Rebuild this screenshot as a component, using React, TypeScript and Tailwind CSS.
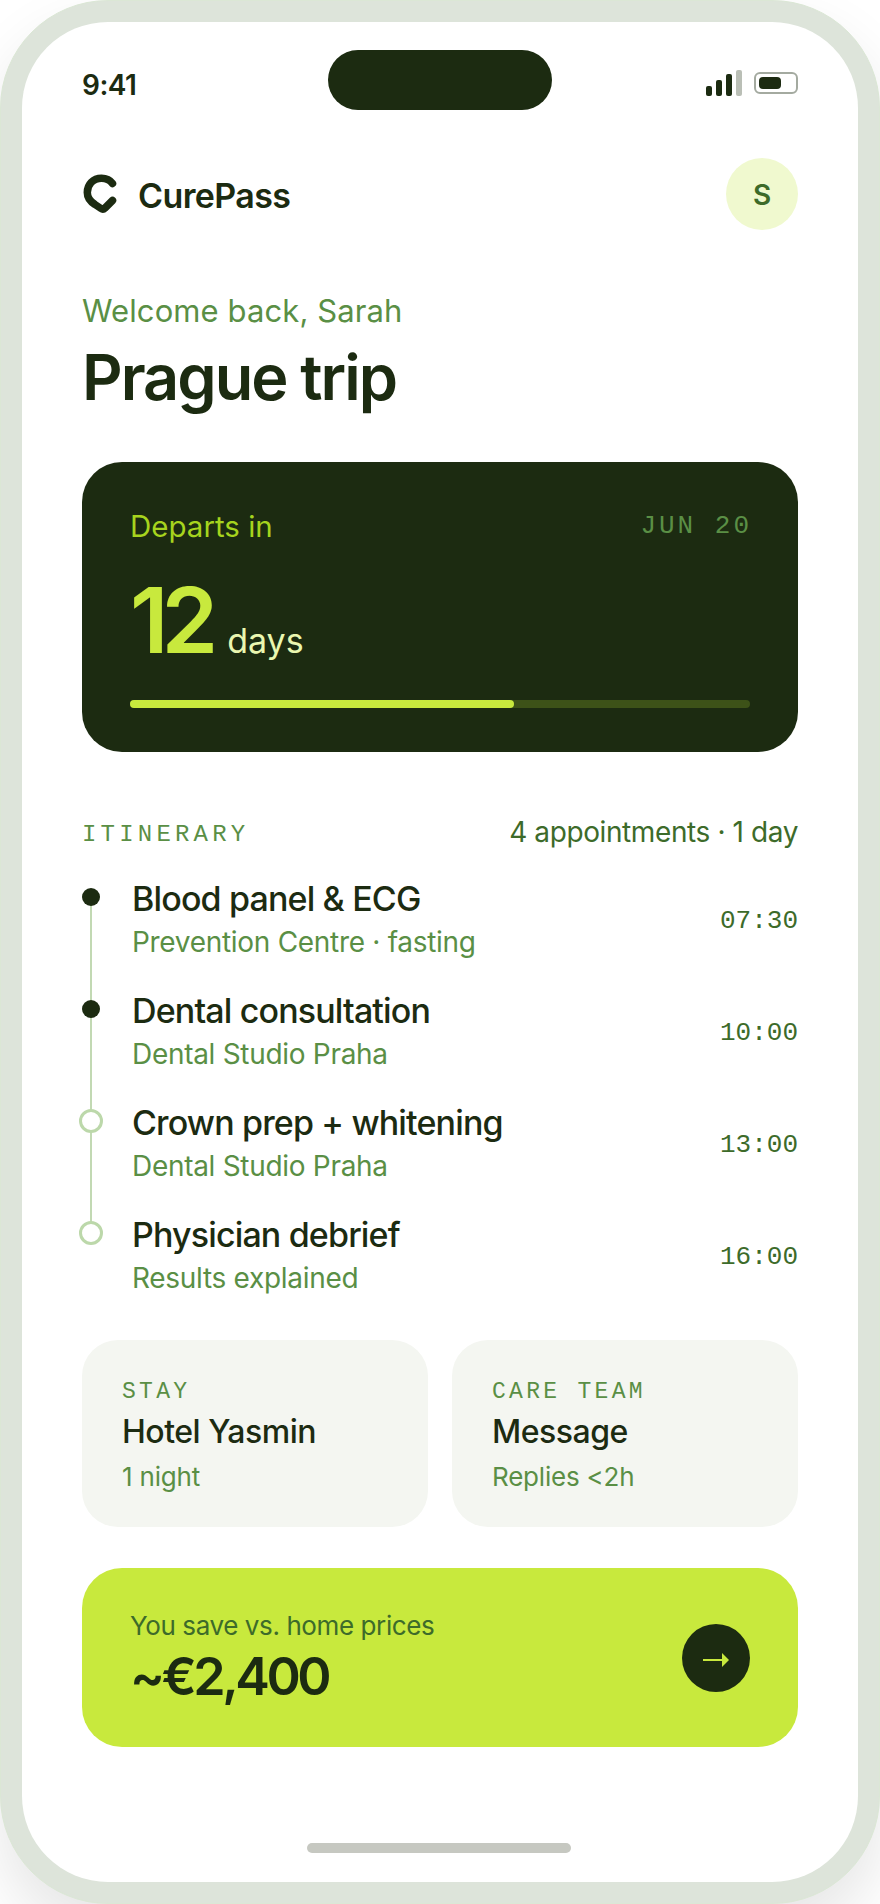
const ink = 'text-[#1c2b11]'
const sans = { fontFamily: 'Inter, sans-serif' }
const mono = { fontFamily: '"Liberation Mono", monospace' }

interface Stop {
  title: string
  sub: string
  time: string
  done: boolean
}

const stops: Stop[] = [
  { title: 'Blood panel & ECG', sub: 'Prevention Centre · fasting', time: '07:30', done: true },
  { title: 'Dental consultation', sub: 'Dental Studio Praha', time: '10:00', done: true },
  { title: 'Crown prep + whitening', sub: 'Dental Studio Praha', time: '13:00', done: false },
  { title: 'Physician debrief', sub: 'Results explained', time: '16:00', done: false },
]

function Logo() {
  return (
    <svg width="36" height="40" viewBox="0 0 36 40" fill="none">
      <path
        d="M29.5 9.5C27 6 23 4.3 18.5 4.3C10 4.3 4.3 10.5 4.3 18.5C4.3 24 8 28 12 30.5L18 34.5C19.5 35.5 21 35 22 34L29.5 26.5"
        stroke="#1c2b11"
        strokeWidth="7.5"
        strokeLinecap="round"
        strokeLinejoin="round"
      />
    </svg>
  )
}

function StatusBar() {
  return (
    <div className="relative h-[90px] shrink-0 pt-[46px] px-[60px] flex justify-between">
      <span className={`text-[28px] leading-[34px] font-semibold tracking-[-0.5px] ${ink}`}>9:41</span>
      <div className="absolute left-[306px] top-[28px] w-[224px] h-[60px] rounded-[30px] bg-[#1c2b11]" />
      <div className="flex items-start gap-[12px] mt-[2px]">
        <div className="flex items-end gap-[4px] h-[26px]">
          <div className="w-[6px] h-[10px] rounded-[2px] bg-[#1c2b11]" />
          <div className="w-[6px] h-[16px] rounded-[2px] bg-[#1c2b11]" />
          <div className="w-[6px] h-[22px] rounded-[2px] bg-[#1c2b11]" />
          <div className="w-[6px] h-[26px] rounded-[2px] bg-[#babfb6]" />
        </div>
        <div className="mt-[2px] w-[44px] h-[22px] rounded-[6px] border-2 border-[#a4aaa0] p-[3px]">
          <div className="w-[22px] h-[12px] rounded-[4px] bg-[#1c2b11]" />
        </div>
      </div>
    </div>
  )
}

function Row({ stop, last }: { stop: Stop; last: boolean }) {
  return (
    <div className="flex h-[112px]">
      <div className="relative w-[50px] shrink-0">
        {!last && <div className="absolute left-[8px] top-[12px] w-[2px] h-[112px] bg-[#c2d9b3]" />}
        {stop.done ? (
          <div className="absolute left-0 top-[8px] w-[18px] h-[18px] rounded-full bg-[#1c2b11]" />
        ) : (
          <div className="absolute -left-[3px] top-[5px] w-[24px] h-[24px] rounded-full border-[3px] border-[#bcd8aa] bg-white" />
        )}
      </div>
      <div className="flex-1 min-w-0">
        <div className={`-mt-[1px] text-[34px] leading-[40px] font-medium tracking-[-0.85px] ${ink}`}>{stop.title}</div>
        <div className="text-[28px] leading-[34px] mt-[6px] text-[#5a8f45] tracking-[-0.3px]">{stop.sub}</div>
      </div>
      <div className="pt-[24px] text-[26px] leading-[34px] text-[#3d6b2a]" style={mono}>
        {stop.time}
      </div>
    </div>
  )
}

function InfoCard({ label, title, sub }: { label: string; title: string; sub: string }) {
  return (
    <div className="h-[187px] rounded-[36px] bg-[#f4f6f1] px-[40px] pt-[39px]">
      <div className="text-[23px] leading-[26px] tracking-[3.3px] text-[#5a8f45]" style={mono}>
        {label}
      </div>
      <div className={`mt-[7px] text-[32px] leading-[40px] font-medium tracking-[-0.5px] ${ink}`}>{title}</div>
      <div className="mt-[9px] text-[26px] leading-[32px] text-[#5a8f45] tracking-[-0.2px]">{sub}</div>
    </div>
  )
}

export default function App() {
  return (
    <div className="w-[880px] h-[1904px] bg-white overflow-hidden" style={sans}>
      <div className="w-[880px] h-[1904px] rounded-[108px] bg-[#dde4da] border border-[#dbe7d5] p-[21px] shadow-[0_30px_60px_rgba(0,0,0,0.1)]">
        <div className="relative h-full rounded-[86px] bg-white overflow-hidden flex flex-col">
          <StatusBar />
          <div className="px-[60px] flex flex-col">
            <div className="flex items-center justify-between mt-[46px] h-[72px]">
              <div className="flex items-center gap-[19px] pl-[1px]">
                <Logo />
                <span className={`pt-[3px] text-[34px] font-semibold tracking-[-0.6px] ${ink}`}>CurePass</span>
              </div>
              <div className="w-[72px] h-[72px] rounded-full bg-[#f0f9cf] flex items-center justify-center pt-[2px] text-[28px] font-semibold text-[#3d6b2a]">
                S
              </div>
            </div>

            <div className="mt-[61px] text-[31px] leading-[40px] tracking-[0.1px] text-[#5a8f45]">Welcome back, Sarah</div>
            <h1 className={`mt-[8px] text-[63px] leading-[76px] font-semibold tracking-[-2px] ${ink}`}>Prague trip</h1>

            <div className="mt-[47px] h-[290px] rounded-[40px] bg-[#1c2b11] px-[48px] pt-[46px]">
              <div className="flex items-center justify-between">
                <span className="text-[29.5px] leading-[36px] text-[#a6d41e]">Departs in</span>
                <span className="text-[26px] leading-[36px] tracking-[3px] -mr-[2px] text-[#5a8f45]" style={mono}>
                  JUN 20
                </span>
              </div>
              <div className="flex items-baseline gap-[16px] mt-[26px]">
                <span className="text-[91px] leading-[100px] font-semibold tracking-[-7px] text-[#c8e93d]">12</span>
                <span className="text-[34px] leading-[40px] text-[#eaf7b0]">days</span>
              </div>
              <div className="mt-[30px] h-[8px] rounded-full bg-[#3d5218]">
                <div className="h-full w-[62%] rounded-full bg-[#c8e93d]" />
              </div>
            </div>

            <div className="mt-[61px] flex items-center justify-between h-[40px]">
              <span className="pt-[3px] text-[24px] tracking-[4.2px] text-[#5a8f45]" style={mono}>
                ITINERARY
              </span>
              <span className="-mt-[3px] text-[28px] text-[#3d6b2a] tracking-[-0.4px]">4 appointments · 1 day</span>
            </div>

            <div className="mt-[27px] flex flex-col">
              {stops.map((s, i) => (
                <Row key={s.time} stop={s} last={i === stops.length - 1} />
              ))}
            </div>

            <div className="mt-[12px] grid grid-cols-2 gap-[24px]">
              <InfoCard label="STAY" title="Hotel Yasmin" sub="1 night" />
              <InfoCard label="CARE TEAM" title="Message" sub="Replies <2h" />
            </div>

            <div className="mt-[41px] h-[179px] rounded-[40px] bg-[#c8e93d] px-[48px] flex items-center justify-between">
              <div>
                <div className="text-[26px] leading-[34px] text-[#3d6b2a] tracking-[-0.4px]">You save vs. home prices</div>
                <div className={`mt-[4px] text-[52px] leading-[60px] font-semibold tracking-[-3.5px] ${ink}`}>~€2,400</div>
              </div>
              <div className="w-[68px] h-[68px] rounded-full bg-[#1c2b11] flex items-center justify-center">
                <svg width="28" height="16" viewBox="0 0 28 16" className="mt-[4px]">
                  <rect x="1" y="7" width="22" height="2" fill="#c8e93d" />
                  <polygon points="20,1 27,8 20,15" fill="#c8e93d" />
                </svg>
              </div>
            </div>
          </div>
          <div className="absolute left-[285px] top-[1821px] w-[264px] h-[10px] rounded-full bg-[#c6c8c1]" />
        </div>
      </div>
    </div>
  )
}
